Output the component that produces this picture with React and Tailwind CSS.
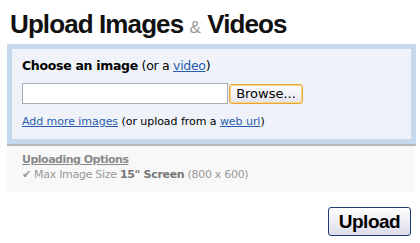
const App = () => {
    return (
        <div className="w-[420px] h-[243px] bg-white overflow-hidden" style={{ fontFamily: '"DejaVu Sans", Verdana, sans-serif' }}>
            <h1 className="pl-[10px] pt-[10px] h-[44px] text-[26px] leading-[28px] font-bold tracking-[-0.9px] text-[#111]" style={{ fontFamily: '"Liberation Sans", Arial, sans-serif' }}>
                Upload Images <span className="text-[17px] font-normal tracking-normal text-[#999]">&amp;</span> Videos
            </h1>

            <div className="ml-[7px] w-[409px] shadow-[0_2px_0_#b8b8b8]">
                <div className="border-[5px] border-[#c6d8ec] bg-[#eff3f9] pl-[10px] pt-[9px] pb-[10px]">
                    <div className="text-[12.5px] leading-[16px] tracking-[-0.3px] text-black">
                        <span className="font-bold">Choose an image</span> (or a <a href="#" className="text-[#2a5db0] underline">video</a>)
                    </div>
                    <div className="flex items-center mt-[9px]">
                        <input type="text" className="w-[206px] h-[21px] bg-white border border-[#a5acb2] outline-none" />
                        <button className="ml-[1px] w-[74px] h-[20px] rounded-[3px] border border-[#e8a33b] bg-gradient-to-b from-white to-[#e4e3ee] text-[13px] leading-[16px] text-black shadow-[inset_0_0_0_1px_#fbd77a]" style={{ fontFamily: 'Tahoma, "DejaVu Sans", sans-serif' }}>
                            Browse...
                        </button>
                    </div>
                    <div className="mt-[11px] text-[11px] leading-[14px] tracking-[-0.05px] text-black">
                        <a href="#" className="text-[#2a5db0] underline">Add more images</a> (or upload from a <a href="#" className="text-[#2a5db0] underline">web url</a>)
                    </div>
                </div>
            </div>

            <div className="ml-[7px] w-[408px] mt-[2px] bg-[#f8f8f8] pl-[15px] pt-[6px] pb-[10px] text-[11px] leading-[15px] tracking-[-0.3px] text-[#999]">
                <div className="font-bold underline text-[#8a8a8a] tracking-[-0.5px]">Uploading Options</div>
                <div>✔ Max Image Size <span className="font-bold text-[#777]">15" Screen</span> (800 x 600)</div>
            </div>

            <div className="flex justify-end pr-[9px] mt-[15px]">
                <button className="w-[83px] h-[29px] rounded-[3px] border border-[#1c3f73] bg-gradient-to-b from-white to-[#dcdcea] text-[19px] font-bold text-black tracking-[-0.5px]" style={{ fontFamily: '"Liberation Sans", Arial, sans-serif' }}>
                    Upload
                </button>
            </div>
        </div>
    )
}

export default App
